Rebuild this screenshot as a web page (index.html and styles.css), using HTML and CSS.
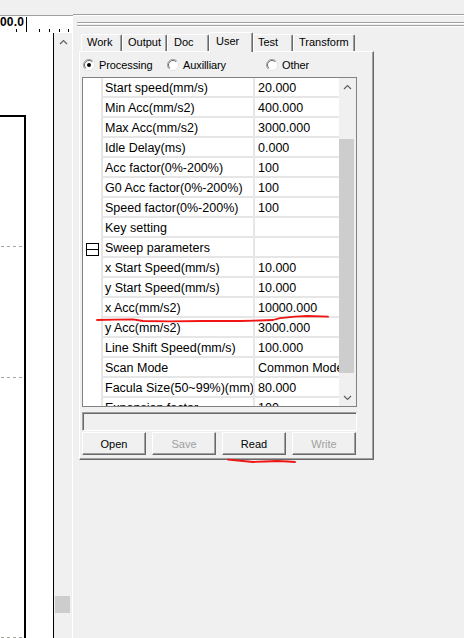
FILE: index.html
```html
<!DOCTYPE html>
<html>
<head>
<meta charset="utf-8">
<title>User parameters</title>
<link rel="stylesheet" href="styles.css">
</head>
<body>
<div class="app">
  <div class="left">
    <div class="ruler">
      <span class="ruler-num">00.0</span>
      <i class="tick tk-main"></i>
      <i class="tick tk1"></i>
      <i class="tick tk2"></i>
      <i class="tick tk3"></i>
      <i class="tick tk4"></i>
      <i class="tick tk5"></i>
    </div>
    <div class="view">
      <div class="canvas">
        <div class="workrect"></div>
        <div class="dash d1"></div>
        <div class="dash d2"></div>
        <div class="dash d3"></div>
      </div>
      <div class="vscroll">
        <div class="sb-btn"><svg width="9" height="6" viewBox="0 0 9 6"><polyline points="1,5 4.5,1.5 8,5" fill="none" stroke="#606060" stroke-width="1.2"/></svg></div>
        <div class="lthumb"></div>
      </div>
    </div>
  </div>

  <div class="right">
    <div class="grip">
      <div class="gl gl1"></div>
      <div class="gl gl2"></div>
      <div class="gl gl3"></div>
    </div>
    <div class="tabs">
      <div class="tab w-work">Work</div>
      <div class="tab w-output">Output</div>
      <div class="tab w-doc">Doc</div>
      <div class="tab sel w-user">User</div>
      <div class="tab w-test">Test</div>
      <div class="tab w-transform">Transform</div>
    </div>
    <div class="panel">
      <div class="radios">
        <div class="radio r1">
          <svg width="12" height="12" viewBox="0 0 12 12"><circle cx="6" cy="6" r="5.5" fill="#fff" stroke="#e3e3e3"/><path d="M2.1 9.9 A5.5 5.5 0 0 1 9.9 2.1" fill="none" stroke="#a0a0a0"/><circle cx="6" cy="6" r="4.5" fill="none" stroke="#fff"/><path d="M2.8 9.2 A4.5 4.5 0 0 1 9.2 2.8" fill="none" stroke="#696969"/><circle cx="6" cy="6" r="2" fill="#000"/></svg>
          <span>Processing</span>
        </div>
        <div class="radio r2">
          <svg width="12" height="12" viewBox="0 0 12 12"><circle cx="6" cy="6" r="5.5" fill="#fff" stroke="#e3e3e3"/><path d="M2.1 9.9 A5.5 5.5 0 0 1 9.9 2.1" fill="none" stroke="#a0a0a0"/><circle cx="6" cy="6" r="4.5" fill="none" stroke="#fff"/><path d="M2.8 9.2 A4.5 4.5 0 0 1 9.2 2.8" fill="none" stroke="#696969"/></svg>
          <span>Auxilliary</span>
        </div>
        <div class="radio r3">
          <svg width="12" height="12" viewBox="0 0 12 12"><circle cx="6" cy="6" r="5.5" fill="#fff" stroke="#e3e3e3"/><path d="M2.1 9.9 A5.5 5.5 0 0 1 9.9 2.1" fill="none" stroke="#a0a0a0"/><circle cx="6" cy="6" r="4.5" fill="none" stroke="#fff"/><path d="M2.8 9.2 A4.5 4.5 0 0 1 9.2 2.8" fill="none" stroke="#696969"/></svg>
          <span>Other</span>
        </div>
      </div>

      <div class="pgrid">
        <div class="pg-body">
          <div class="row"><div class="g"></div><div class="n">Start speed(mm/s)</div><div class="v">20.000</div></div>
          <div class="row"><div class="g"></div><div class="n">Min Acc(mm/s2)</div><div class="v">400.000</div></div>
          <div class="row"><div class="g"></div><div class="n">Max Acc(mm/s2)</div><div class="v">3000.000</div></div>
          <div class="row"><div class="g"></div><div class="n">Idle Delay(ms)</div><div class="v">0.000</div></div>
          <div class="row"><div class="g"></div><div class="n">Acc factor(0%-200%)</div><div class="v">100</div></div>
          <div class="row"><div class="g"></div><div class="n">G0 Acc factor(0%-200%)</div><div class="v">100</div></div>
          <div class="row"><div class="g"></div><div class="n">Speed factor(0%-200%)</div><div class="v">100</div></div>
          <div class="row"><div class="g"></div><div class="n">Key setting</div><div class="v"></div></div>
          <div class="row"><div class="g"><span class="expander"></span></div><div class="n">Sweep parameters</div><div class="v"></div></div>
          <div class="row"><div class="g"></div><div class="n">x Start Speed(mm/s)</div><div class="v">10.000</div></div>
          <div class="row"><div class="g"></div><div class="n">y Start Speed(mm/s)</div><div class="v">10.000</div></div>
          <div class="row"><div class="g"></div><div class="n">x Acc(mm/s2)</div><div class="v">10000.000</div></div>
          <div class="row"><div class="g"></div><div class="n">y Acc(mm/s2)</div><div class="v">3000.000</div></div>
          <div class="row"><div class="g"></div><div class="n">Line Shift Speed(mm/s)</div><div class="v">100.000</div></div>
          <div class="row"><div class="g"></div><div class="n">Scan Mode</div><div class="v">Common Mode</div></div>
          <div class="row"><div class="g"></div><div class="n">Facula Size(50~99%)(mm)</div><div class="v">80.000</div></div>
          <div class="row"><div class="g"></div><div class="n">Expansion factor</div><div class="v">100</div></div>
        </div>
        <div class="pg-sb">
          <div class="sb-btn"><svg width="9" height="6" viewBox="0 0 9 6"><polyline points="1,5 4.5,1.5 8,5" fill="none" stroke="#606060" stroke-width="1.2"/></svg></div>
          <div class="pthumb"></div>
          <div class="sb-btn down"><svg width="9" height="6" viewBox="0 0 9 6"><polyline points="1,1 4.5,4.5 8,1" fill="none" stroke="#606060" stroke-width="1.2"/></svg></div>
        </div>
      </div>

      <div class="status"></div>

      <div class="btns">
        <div class="btn">Open</div>
        <div class="btn dis">Save</div>
        <div class="btn">Read</div>
        <div class="btn dis">Write</div>
      </div>
    </div>
  </div>

  <svg class="annot" width="464" height="638" viewBox="0 0 464 638">
    <polyline points="97,320 115,319.6 133,319.4 143,321 170,321.4 203,321 240,321 260,320.5 273,320 280,318.2 295,316.6 307,316 328,316.6" fill="none" stroke="#f01414" stroke-width="1.8" stroke-linecap="round" stroke-linejoin="round"/>
    <polyline points="228,459.6 243,461 253,462 265,461.5 277,461 288,461.5 295,462" fill="none" stroke="#f01414" stroke-width="1.8" stroke-linecap="round" stroke-linejoin="round"/>
  </svg>
</div>
</body>
</html>
```

FILE: styles.css
```css
* { box-sizing: border-box; }
html, body { margin: 0; padding: 0; }
body {
  width: 464px;
  height: 638px;
  overflow: hidden;
  background: #f0f0f0;
  font-family: "Liberation Sans", Arial, sans-serif;
  font-size: 12.5px;
  color: #000;
}
.app { position: relative; display: flex; width: 464px; height: 638px; }

/* ---------- left drawing view ---------- */
.left { width: 73px; display: flex; flex-direction: column; padding-top: 15px; }
.ruler {
  position: relative;
  height: 18px;
  background: #fff;
  border-top: 1px solid #a0a0a0;
  overflow: hidden;
}
.ruler-num {
  position: absolute;
  left: 0;
  top: -1px;
  font-size: 12px;
  font-weight: bold;
  line-height: 14px;
  letter-spacing: 0.2px;
}
.tick { position: absolute; width: 1px; background: #000; bottom: 1px; height: 3px; }
.tk-main { left: 26px; height: 15px; }
.tk1 { left: 16px; }
.tk2 { left: 39px; }
.tk3 { left: 49px; }
.tk4 { left: 59px; }
.tk5 { left: 68px; }

.view { flex: 1; display: flex; }
.canvas {
  position: relative;
  width: 54px;
  background: #fff;
  border-right: 1px solid #000;
  overflow: hidden;
}
.workrect {
  position: absolute;
  left: -10px;
  top: 82px;
  width: 36px;
  height: 900px;
  border: 2px solid #000;
}
.dash {
  position: absolute;
  left: 1px;
  width: 21px;
  height: 1px;
  background: repeating-linear-gradient(90deg, #a8a8a0 0 3px, transparent 3px 6px);
}
.d1 { top: 213px; }
.d2 { top: 344px; }
.d3 { top: 604px; }

.vscroll { width: 19px; background: #f0f0f0; border-right: 1px solid #fff; }
.sb-btn { height: 17px; display: flex; align-items: center; justify-content: center; }
.lthumb { width: 15px; height: 17px; margin: 546px 0 0 1px; background: #cdcdcd; }

/* ---------- right dock panel ---------- */
.right { flex: 1; display: flex; flex-direction: column; }
.grip { height: 32px; padding-top: 14px; }
.gl { height: 2px; border-top: 1px solid #a0a0a0; border-bottom: 1px solid #fff; }
.gl2 { margin: 6px 0 0 4px; }
.gl3 { margin: 1px 0 0 4px; }

.tabs {
  position: relative;
  z-index: 2;
  display: flex;
  height: 20px;
  margin-bottom: -1px;
  padding-left: 8px;
  font-size: 11px;
}
.tab {
  height: 17px;
  margin-top: 2px;
  padding-left: 5px;
  line-height: 15px;
  white-space: nowrap;
  background: #f0f0f0;
  border: 1px solid;
  border-color: #fff #696969 transparent #fff;
  border-bottom: 0;
  border-radius: 2px 2px 0 0;
  box-shadow: inset -1px 0 #a0a0a0;
}
.tab.sel { height: 20px; margin-top: 0; padding-left: 6px; line-height: 17px; }
.w-work { width: 41px; }
.w-output { width: 45px; }
.w-doc { width: 42px; padding-left: 6px; }
.w-user { width: 44px; }
.w-test { width: 40px; padding-left: 4px; }
.w-transform { width: 62px; }

.panel {
  width: 295px;
  height: 409px;
  margin-left: 6px;
  padding: 5px 0 0 2px;
  border: 1px solid;
  border-color: #fff #696969 #696969 #fff;
  box-shadow: inset -1px -1px #a0a0a0;
}

.radios { display: flex; height: 15px; padding-left: 1px; font-size: 11px; letter-spacing: -0.1px; }
.radio { display: flex; align-items: center; gap: 4px; }
.r1 { width: 84px; }
.r2 { width: 99px; }

.pgrid {
  display: flex;
  width: 275px;
  height: 330px;
  margin-top: 5px;
  background: #fff;
  border: 1px solid #828282;
}
.pg-body { flex: 1; overflow: hidden; }
.row { display: flex; height: 20px; }
.g { width: 20px; flex: none; border-right: 2px solid #e6e6e6; }
.n, .v {
  height: 20px;
  padding-top: 2px;
  line-height: 17px;
  white-space: nowrap;
  overflow: hidden;
  border-bottom: 2px solid #e6e6e6;
}
.n { width: 152px; flex: none; padding-left: 2px; border-right: 2px solid #e6e6e6; }
.v { flex: 1; padding-left: 3px; }
.expander {
  display: block;
  position: relative;
  width: 13px;
  height: 13px;
  margin: 5px 0 0 3px;
  border: 1px solid #000;
  background: #fff;
}
.expander::after {
  content: "";
  position: absolute;
  left: 0;
  right: 0;
  top: 5px;
  height: 1px;
  background: #000;
}

.pg-sb { width: 17px; display: flex; flex-direction: column; background: #f0f0f0; }
.pthumb { width: 15px; height: 234px; margin-top: 44px; background: #cdcdcd; }
.pg-sb .down { margin-top: auto; }

.status {
  width: 275px;
  height: 19px;
  margin-top: 5px;
  border: 1px solid;
  border-color: #a0a0a0 #fff #fff #a0a0a0;
  box-shadow: inset 1px 1px #696969;
}

.btns { display: flex; gap: 6px; margin-top: 1px; font-size: 11px; }
.btn {
  width: 64px;
  height: 23px;
  display: flex;
  align-items: center;
  justify-content: center;
  border: 1px solid;
  border-color: #fff #696969 #696969 #fff;
  box-shadow: inset -1px -1px #a0a0a0;
}
.btn.dis { color: #a0a0a0; }

.annot { position: absolute; left: 0; top: 0; pointer-events: none; }
```
